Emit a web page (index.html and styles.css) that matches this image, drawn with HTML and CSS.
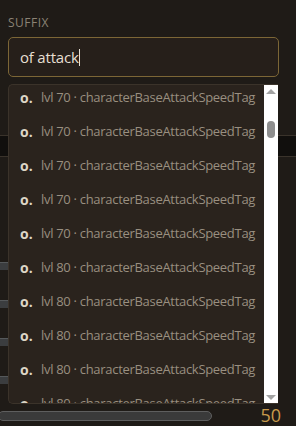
FILE: index.html
```html
<!DOCTYPE html>
<html>
<head>
<meta charset="utf-8">
<title>Suffix</title>
<link rel="stylesheet" href="styles.css">
</head>
<body>
<div class="panel">
    <div class="label">SUFFIX</div>
    <div class="field">
        <div class="input">of attack<span class="caret"></span></div>
    </div>

    <!-- content under the dropdown -->
    <div class="under">
        <div class="band"></div>
        <div class="rows">
            <div class="bar"></div>
            <div class="bar"></div>
            <div class="bar"></div>
            <div class="bar"></div>
        </div>
        <div class="foot">
            <div class="slider"></div>
            <div class="value">50</div>
        </div>
    </div>

    <!-- suggestions menu -->
    <div class="menu">
        <ul class="list">
            <li><b>o.</b><span>lvl 70 · characterBaseAttackSpeedTag</span></li>
            <li><b>o.</b><span>lvl 70 · characterBaseAttackSpeedTag</span></li>
            <li><b>o.</b><span>lvl 70 · characterBaseAttackSpeedTag</span></li>
            <li><b>o.</b><span>lvl 70 · characterBaseAttackSpeedTag</span></li>
            <li><b>o.</b><span>lvl 70 · characterBaseAttackSpeedTag</span></li>
            <li><b>o.</b><span>lvl 80 · characterBaseAttackSpeedTag</span></li>
            <li><b>o.</b><span>lvl 80 · characterBaseAttackSpeedTag</span></li>
            <li><b>o.</b><span>lvl 80 · characterBaseAttackSpeedTag</span></li>
            <li><b>o.</b><span>lvl 80 · characterBaseAttackSpeedTag</span></li>
            <li><b>o.</b><span>lvl 80 · characterBaseAttackSpeedTag</span></li>
        </ul>
        <div class="scroll">
            <div class="arrow up"></div>
            <div class="track"><div class="thumb"></div></div>
            <div class="arrow down"></div>
        </div>
    </div>
</div>
</body>
</html>
```

FILE: styles.css
```css
html, body {
    margin: 0;
    padding: 0;
    background: #1f1b17;
    font-family: "Open Sans", "Noto Sans", sans-serif;
}
.panel {
    position: relative;
    width: 296px;
    height: 426px;
    overflow: hidden;
    display: flex;
    flex-direction: column;
}
.label {
    padding: 14px 0 0 8px;
    height: 17px;
    font-size: 12px;
    letter-spacing: 0.5px;
    color: #8b8375;
}
.field {
    padding: 6px 17px 0 8px;
}
.input {
    height: 38px;
    border: 1px solid #7c6636;
    border-radius: 5px;
    background: #261f1a;
    color: #e6dfd2;
    font-size: 15px;
    line-height: 38px;
    padding-left: 11px;
    letter-spacing: -0.2px;
}
.caret {
    display: inline-block;
    width: 1px;
    height: 17px;
    background: #e6dfd2;
    vertical-align: -3px;
}
.under {
    flex: 1;
    display: flex;
    flex-direction: column;
    padding-top: 58px;
}
.band {
    height: 20px;
    background: #110f0d;
    border-top: 1px solid #3a332b;
    border-bottom: 1px solid #3a332b;
}
.rows {
    display: flex;
    flex-direction: column;
    gap: 30px;
    padding-top: 105px;
}
.bar {
    width: 200px;
    height: 7px;
    margin-left: -10px;
    background: #3b3d3f;
    border-top: 1px solid #55585a;
    border-radius: 4px;
}
.foot {
    margin-top: auto;
    display: flex;
    align-items: flex-start;
    justify-content: space-between;
    padding: 0 15px 2px 0;
}
.slider {
    width: 212px;
    height: 8px;
    margin-top: 5px;
    margin-left: -2px;
    border: 1px solid #5e5e5e;
    background: #3a3a3a;
    border-radius: 5px;
}
.value {
    font-size: 18px;
    line-height: 18px;
    color: #c89a4c;
}
.menu {
    position: absolute;
    left: 8px;
    top: 84px;
    width: 270px;
    height: 320px;
    display: flex;
    background: #2a231d;
    border: 1px solid #3b332a;
    border-right: none;
    border-radius: 5px 0 0 5px;
    box-sizing: border-box;
    overflow: hidden;
}
.list {
    flex: 1;
    list-style: none;
    margin: -5px 0 0 0;
    padding: 0;
}
.list li {
    height: 34px;
    display: flex;
    align-items: center;
    padding-left: 11px;
    white-space: nowrap;
    font-size: 13px;
}
.list li b {
    width: 21px;
    color: #ddd5c6;
    font-size: 14px;
}
.list li span {
    color: #998f80;
    letter-spacing: -0.3px;
}
.scroll {
    width: 14px;
    background: #ffffff;
    display: flex;
    flex-direction: column;
}
.arrow {
    height: 12px;
    display: flex;
    justify-content: center;
    align-items: center;
}
.arrow.up::before {
    content: "";
    border-left: 5px solid transparent;
    border-right: 5px solid transparent;
    border-bottom: 5px solid #a3a3a3;
}
.arrow.down::before {
    content: "";
    border-left: 5px solid transparent;
    border-right: 5px solid transparent;
    border-top: 5px solid #a3a3a3;
}
.track {
    flex: 1;
    padding: 24px 3px 0 3px;
}
.thumb {
    height: 17px;
    background: #8e8e8e;
    border-radius: 4px;
}
```
